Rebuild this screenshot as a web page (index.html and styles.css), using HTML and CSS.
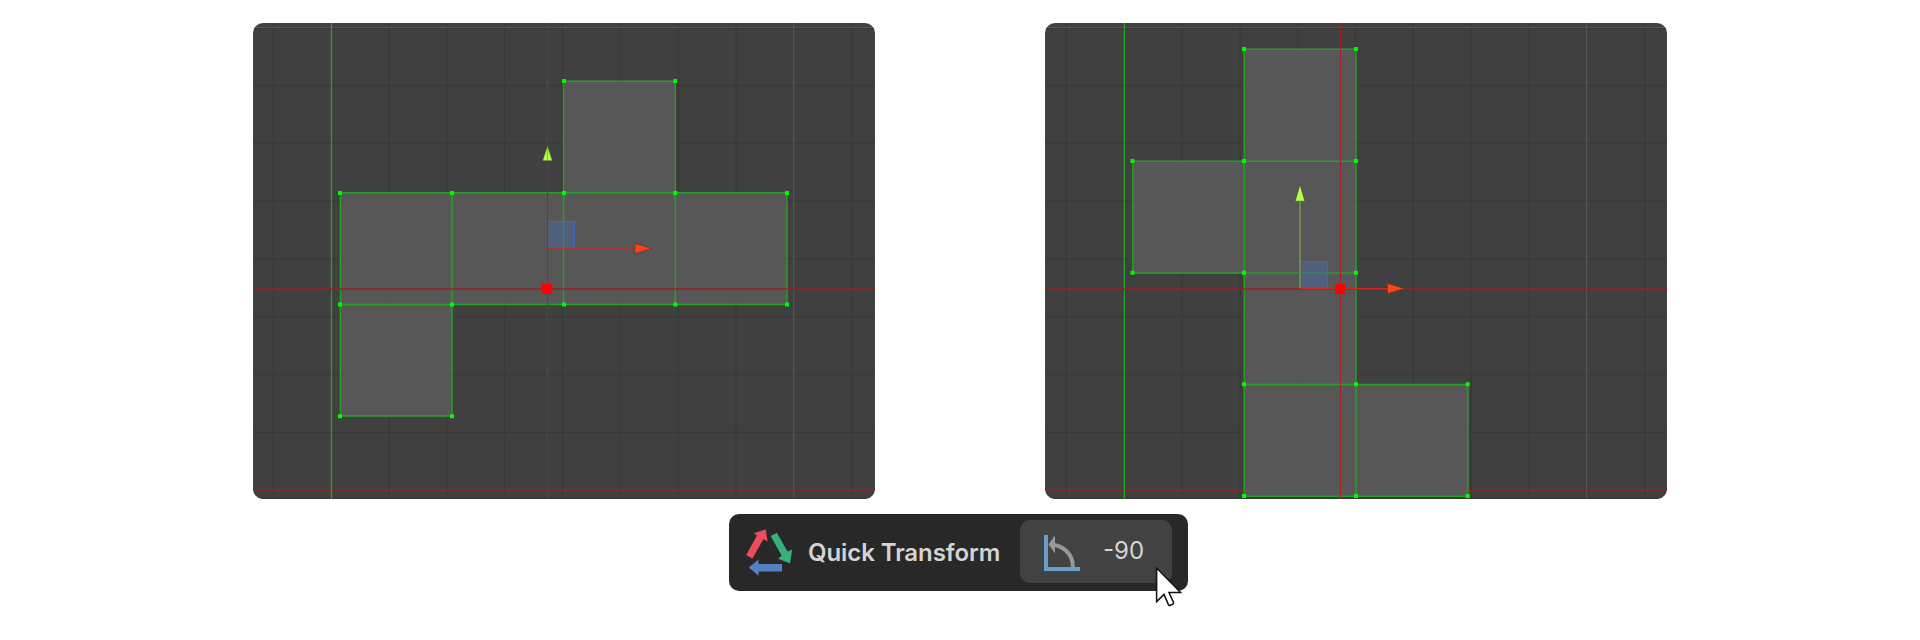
FILE: index.html
```
<!DOCTYPE html>
<html lang="en">
<head>
<meta charset="utf-8">
<title>Quick Transform</title>
<link rel="stylesheet" href="styles.css">
</head>
<body>
<main class="page">
  <div class="viewports">
    <svg class="viewport" viewBox="0 0 622 476" role="img" aria-label="Before rotation">
      <path class="grid" d="M20.5 0V476M136.1 0V476M193.9 0V476M251.6 0V476M309.5 0V476M367.3 0V476M425.3 0V476M483 0V476M598.8 0V476M0 5.5H622M0 62.5H622M0 120.2H622M0 178.2H622M0 235.8H622M0 293.6H622M0 351.5H622M0 409.3H622M0 475H622"/>
      <path class="grid-major" d="M0 4.5H622M540.7 0V476"/>
      <path class="axis-x" d="M0 467H622"/>
      <path class="axis-y" d="M78.5 0V476"/>
      <path class="face" d="M310.5 58.3H422.3V169.8H534V281.5H199V393H87.4V169.8H310.5Z"/>
      <path class="edge" d="M310.5 169.8V58.3H422.3V281.5M310.5 169.8V281.5M87.4 169.8H534V281.5H87.4M87.4 169.8V393H199V169.8"/>
      <rect class="plane" x="294.5" y="198.5" width="27" height="27"/>
      <path class="shaft-x" d="M294.5 225.5H382"/>
      <path class="cone-x" d="M382 220.3L398.6 225.5L382 230.7Z"/>
      <path class="pivot-v" d="M294.5 0V476"/>
      <path class="cone-y" d="M294.5 122.4L299.4 137.8H289.6Z"/>
      <path class="pivot-v pivot-faint" d="M294.5 124V138"/>
      <path class="axis-x" d="M0 266H622"/>
      <path class="vertex" d="M309 56h4v4h-4zM420.3 56h4v4h-4zM85 168h4v4h-4zM197 168h4v4h-4zM309 168h4v4h-4zM420.3 168h4v4h-4zM532 168h4v4h-4zM85 279.5h4v4h-4zM197 279.5h4v4h-4zM309 279.5h4v4h-4zM420.3 279.5h4v4h-4zM532 279.5h4v4h-4zM85 391.3h4v4h-4zM197 391.3h4v4h-4z"/>
      <rect class="pivot" x="289" y="260.8" width="10.3" height="10.2"/>
    </svg>
    <svg class="viewport" viewBox="0 0 622 476" role="img" aria-label="After rotation">
      <path class="grid" d="M21.4 0V476M137 0V476M195 0V476M252.6 0V476M310.4 0V476M368.2 0V476M426.1 0V476M484 0V476M599.7 0V476M0 5.5H622M0 62.5H622M0 120.2H622M0 178.2H622M0 235.8H622M0 293.6H622M0 351.5H622M0 409.3H622M0 475H622"/>
      <path class="grid-major" d="M0 4.5H622M541.6 0V476"/>
      <path class="axis-x" d="M0 467H622"/>
      <path class="axis-y" d="M79.4 0V476"/>
      <path class="face" d="M199.3 26.3H311V361.5H422.8V473.2H199.3V250H87.8V138.2H199.3Z"/>
      <path class="edge" d="M199.3 26.3H311V473.2M199.3 26.3V473.2M311 138.2H87.8V250H311M199.3 361.5H422.8V473.2H199.3"/>
      <rect class="plane" x="255.5" y="238.5" width="27" height="27"/>
      <path class="shaft-y" d="M255 178V265.5"/>
      <path class="cone-y" d="M255 161.7L259.8 178.2H250.2Z"/>
      <path class="pivot-v" d="M295.5 0V476"/>
      <path class="axis-x" d="M0 266H622"/>
      <path class="shaft-x shaft-bright" d="M255 265.6H343"/>
      <path class="cone-x" d="M342.4 260.3L359.4 265.5L342.4 270.7Z"/>
      <path class="vertex" d="M197 24h4v4h-4zM309 24h4v4h-4zM85.5 136h4v4h-4zM197 136h4v4h-4zM309 136h4v4h-4zM85.5 247.8h4v4h-4zM197 247.8h4v4h-4zM309 247.8h4v4h-4zM197 359.3h4v4h-4zM309 359.3h4v4h-4zM420.7 359.3h4v4h-4zM197 471h4v4h-4zM309 471h4v4h-4zM420.7 471h4v4h-4z"/>
      <rect class="pivot" x="290" y="260.8" width="10.2" height="10.2"/>
    </svg>
  </div>
  <div class="toolbar">
    <svg class="logo" viewBox="0 0 48 50" aria-hidden="true">
      <path fill="#ec4d5d" d="M19.8 1.4L7.8 5.2L11 7.6L.2 26.9L6.4 30.6L17.4 11.2L21.6 13.4Z"/>
      <path fill="#34b277" d="M24.6 8L30.8 4.8L41.6 23.6L46.2 21.4L44 35.4L32.2 30.8L35.6 27.4Z"/>
      <path fill="#5581c3" d="M2.8 39.6L12.6 31.6V35.9H36V43.5H12.6V47.7Z"/>
    </svg>
    <span class="title">Quick Transform</span>
    <div class="field">
      <svg class="angle" viewBox="0 0 38 40" aria-hidden="true">
        <path fill="none" stroke="#999" stroke-width="4" d="M6 11.3C17.5 12 29 19.5 28.8 34"/>
        <path fill="#999" d="M4.5 11.3L11 2.5V20.5Z"/>
        <path fill="#6b9dcb" d="M0 2H4V34H36V38H0Z"/>
      </svg>
      <span class="value">-90</span>
      <svg class="cursor" viewBox="0 0 30 44" aria-hidden="true">
        <path d="M1.6 2V35.6L9 28.4L13.4 38.6Q14 39.8 15.2 39.3L17.8 38.2Q19 37.6 18.5 36.4L14 26.6H25.6Z"/>
      </svg>
    </div>
  </div>
</main>
</body>
</html>
```
FILE: styles.css
```
body {
  margin: 0;
  background: #fff;
  font-family: Inter, "Liberation Sans", sans-serif;
}

.page {
  box-sizing: border-box;
  width: 1920px;
  height: 640px;
  padding: 23px 253px 0;
}

.viewports {
  display: flex;
  justify-content: space-between;
}

.viewport {
  display: block;
  width: 622px;
  height: 476px;
  border-radius: 10px;
  background: #404040;
}

.grid,
.grid-major,
.axis-x,
.axis-y,
.edge,
.pivot-v,
.shaft-x,
.shaft-y { fill: none; }

.grid { stroke: #393939; stroke-width: 1.3; }
.grid-major { stroke: #555; stroke-width: 1.1; }
.axis-x { stroke: #9a1f22; stroke-width: 1.6; }
.axis-y { stroke: #22a822; stroke-width: 1.2; }
.face { fill: #5b5b5b; fill-opacity: .87; }
.edge { stroke: #28a028; stroke-width: 1.4; }
.vertex { fill: #00fb00; }
.plane { fill: #4a67a0; fill-opacity: .5; stroke: #4767b4; stroke-width: 1; }
.shaft-x { stroke: #a33a32; stroke-width: 1; }
.shaft-bright { stroke: #cf2b20; stroke-width: 1.3; }
.shaft-y { stroke: #718651; stroke-width: 2; }
.cone-x { fill: #ff4218; stroke: #3d3533; stroke-width: .5; }
.cone-y { fill: #b3ff4d; stroke: #414535; stroke-width: .5; }
.pivot-v { stroke: #a62222; stroke-width: 1; }
.pivot-faint { stroke-opacity: .4; }
.pivot { fill: #f00; }

.toolbar {
  box-sizing: border-box;
  display: flex;
  align-items: center;
  width: 459px;
  height: 77px;
  margin: 15px 0 0 476px;
  padding: 0 16px 0 17px;
  border-radius: 10px;
  background: #282828;
}

.logo {
  flex: none;
  width: 48px;
  height: 50px;
}

.title {
  margin-left: 14px;
  color: #d4d4d4;
  font-size: 24px;
  font-weight: 600;
  line-height: 30px;
  letter-spacing: -.08px;
  white-space: nowrap;
}

.field {
  position: relative;
  box-sizing: border-box;
  display: flex;
  align-items: center;
  width: 152px;
  height: 63px;
  margin: -2px 0 0 auto;
  padding-left: 24px;
  border-radius: 10px;
  background: #424242;
}

.angle {
  flex: none;
  width: 38px;
  height: 40px;
  margin-top: 3px;
}

.value {
  margin-left: 21px;
  color: #d4d4d4;
  font-size: 24px;
  line-height: 30px;
  margin-top: -2px;
}

.cursor {
  position: absolute;
  left: 135px;
  top: 46px;
  width: 30px;
  height: 44px;
  overflow: visible;
  fill: #fff;
  stroke: #111;
  stroke-width: 1.5;
}
```
